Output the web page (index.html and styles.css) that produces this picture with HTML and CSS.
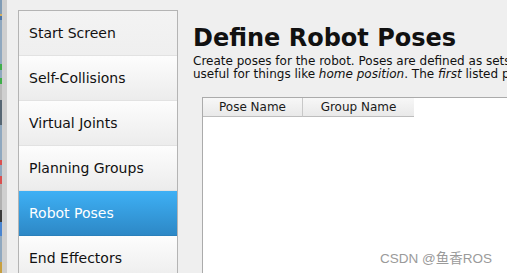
FILE: index.html
```html
<!DOCTYPE html>
<html lang="en">
<head>
  <meta charset="UTF-8" />
  <title>Define Robot Poses</title>
  <link rel="stylesheet" href="styles.css">
</head>
<body>
  <div class="screen">
    <div class="desk"></div>
    <div class="frame"></div>
    <div class="window">
      <ul class="nav">
        <li>Start Screen</li>
        <li>Self-Collisions</li>
        <li>Virtual Joints</li>
        <li>Planning Groups</li>
        <li class="active">Robot Poses</li>
        <li>End Effectors</li>
      </ul>

      <div class="content">
        <h1>Define Robot Poses</h1>
        <p class="desc">Create poses for the robot. Poses are defined as sets of joint values for particular planning groups. This is<br>
          useful for things like <i>home position</i>. The <i>first</i> listed pose will be the robot's initial pose in simulation.</p>

        <div class="poses">
          <div class="poses-head">
            <div class="col col-pose">Pose Name</div>
            <div class="col col-group">Group Name</div>
          </div>
          <div class="poses-body">
            <span class="mark">CSDN @鱼香ROS</span>
          </div>
        </div>
      </div>
    </div>
  </div>
</body>
</html>
```

FILE: styles.css
```css
html, body {
  margin: 0;
  padding: 0;
}
body {
  width: 507px;
  height: 273px;
  overflow: hidden;
  background: #efefef;
  font-family: "DejaVu Sans", sans-serif;
  color: #1a1a1a;
}
.screen {
  display: flex;
  height: 273px;
  overflow: hidden;
}
.desk {
  width: 2px;
  flex: none;
  background: linear-gradient(to bottom,
    #7f9bb5 0, #7f9bb5 14px, #d6b060 14px, #d6b060 16px, #4d76a8 16px, #4d76a8 20px,
    #8fa8bf 20px, #8fa8bf 64px, #3fae4a 64px, #3fae4a 70px, #8fa8bf 70px, #8fa8bf 78px,
    #3fae4a 78px, #3fae4a 84px, #b9b9b9 84px, #b9b9b9 100px, #566673 100px, #566673 125px,
    #8fa8bf 125px, #8fa8bf 160px, #d95050 160px, #d95050 165px, #8fa8bf 165px, #8fa8bf 176px,
    #d95050 176px, #d95050 184px, #b0b0b0 184px, #b0b0b0 210px, #3a3a3a 210px, #3a3a3a 222px,
    #4a85d0 222px, #4a85d0 236px, #8fa8bf 236px, #8fa8bf 262px, #c8a040 262px, #c8a040 273px);
}
.frame {
  width: 5px;
  flex: none;
  background: #cfcfcf;
}
.window {
  flex: 1;
  display: flex;
  padding: 10px 0 0 11px;
  min-width: 0;
}

.nav {
  list-style: none;
  margin: 0;
  padding: 0;
  width: 158px;
  flex: none;
  border: 1px solid #b4b4b4;
  border-bottom: none;
  background: #fff;
}
.nav li {
  height: 45px;
  line-height: 44px;
  padding-left: 10px;
  font-size: 14px;
  color: #111;
  background: linear-gradient(to bottom, #fdfdfd, #ececec);
  border-bottom: 1px solid #e2e2e2;
  box-sizing: border-box;
}
.nav li:first-child {
  background: linear-gradient(to bottom, #f3f3f3, #efefef);
}
.nav li.active {
  color: #fff;
  border-bottom-color: #2a80bb;
  background: linear-gradient(to bottom, #3eb0f5, #2d88c6);
}

.content {
  flex: 1;
  min-width: 0;
  padding: 0 0 0 15px;
  white-space: nowrap;
  overflow: hidden;
}
.content h1 {
  margin: 13px 0 0;
  font-size: 24px;
  line-height: 30px;
  font-weight: bold;
  color: #111;
}
.desc {
  margin: 2px 0 0;
  font-size: 12px;
  line-height: 13px;
  color: #111;
}
.poses {
  margin: 16px 0 0 9px;
  border: 1px solid #ababab;
  border-right: none;
  background: #fff;
  height: 200px;
}
.poses-head {
  display: flex;
  height: 19px;
}
.col {
  font-size: 12px;
  line-height: 19px;
  text-align: center;
  box-sizing: border-box;
  background: linear-gradient(to bottom, #f7f7f7, #e9e9e9);
  border-bottom: 1px solid #bdbdbd;
}
.col-pose {
  width: 100px;
  border-right: 1px solid #c8c8c8;
}
.col-group {
  width: 111px;
}
.poses-body {
  position: relative;
  height: 160px;
}
.mark {
  position: absolute;
  left: 177px;
  top: 130px;
  font-family: "Liberation Sans", "Noto Sans CJK SC", sans-serif;
  font-size: 13.5px;
  color: #9a9a9a;
}
```
